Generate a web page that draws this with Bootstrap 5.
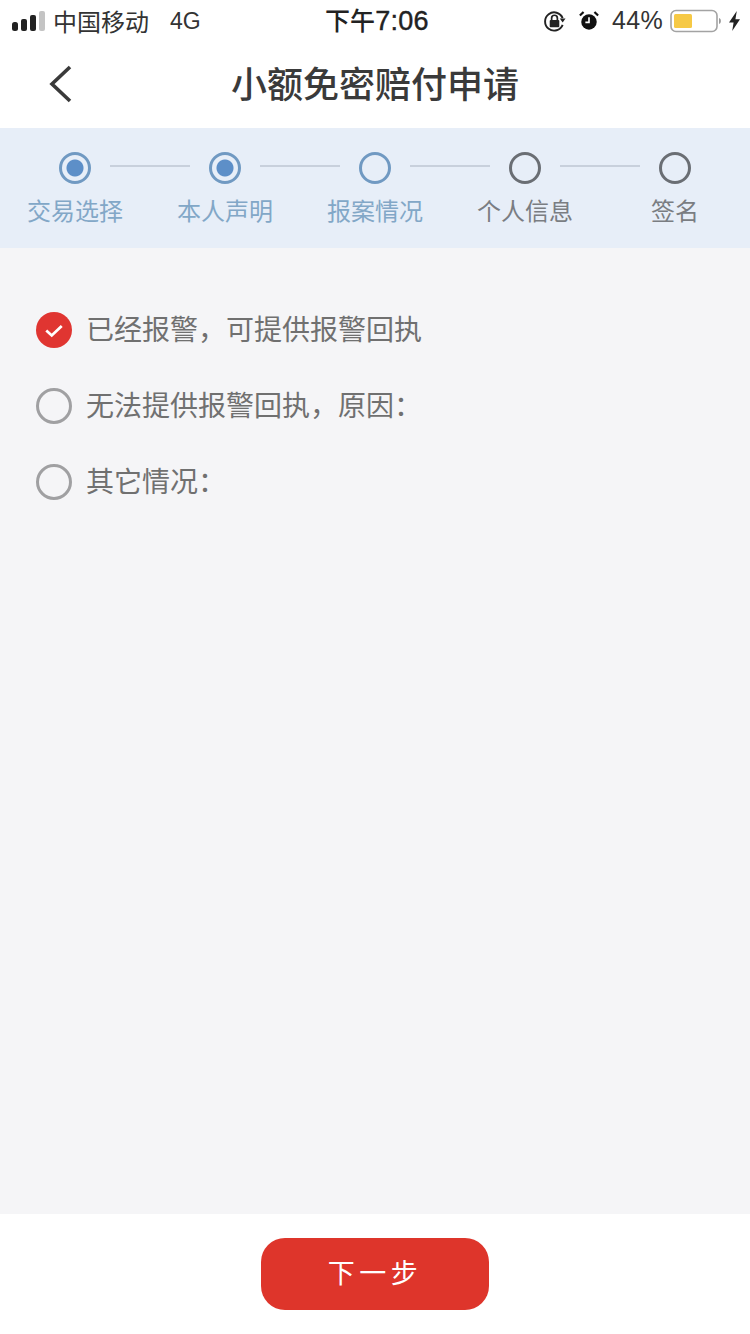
<!DOCTYPE html>
<html lang="zh">
<head>
  <meta charset="utf-8">
  <title>小额免密赔付申请</title>
  <link rel="stylesheet" href="https://cdn.jsdelivr.net/npm/bootstrap@5.3.0/dist/css/bootstrap.min.css">
  <style>
    html, body { height: 100%; }
    body { font-family: "Liberation Sans", "Noto Sans CJK SC", sans-serif; color: #666; background: #fff; }
    .cjk { font-family: "Noto Sans CJK SC", sans-serif; }
    .phone { width: 750px; height: 1334px; }
    .status-bar { height: 40px; padding: 2px 10px 0 12px; font-size: 24px; color: #333; }
    .status-left, .status-right { width: 300px; }
    .status-time { font-size: 25px; font-weight: 500; color: #222; padding-left: 2px; }
    .status-time b { font-family: "Liberation Sans", sans-serif; font-size: 27px; font-weight: 400; letter-spacing: .3px; -webkit-text-stroke: .4px #222; }
    .status-pct { font-size: 25px; letter-spacing: .3px; }
    .title-bar { height: 88px; }
    .title-bar h1 { font-size: 36px; font-weight: 500; color: #3a3a3a; margin: 0; padding-bottom: 2px; }
    .back-link { left: 46px; top: 24px; line-height: 0; }
    .steps { height: 120px; background: #e7eef8; padding-top: 24px; }
    .step-dots { padding: 0 59px; gap: 19px; height: 32px; }
    .dot { width: 32px; height: 32px; border-radius: 50%; border: 3px solid #6a6e74; flex: none; }
    .dot.on { border-color: #7099c2; }
    .dot.done { background: radial-gradient(circle, #5d8fc8 0 8px, transparent 9px); }
    .dot-line { width: 80px; height: 2px; background: #c8d0dc; margin-bottom: 4px; }
    .step-names { margin-top: 10px; }
    .step-names > div { width: 150px; font-size: 24px; line-height: 32px; text-align: center; color: #7a7d82; }
    .step-names > div.on { color: #82a7c7; }
    .content { background: #f5f5f7; padding: 64px 36px 0; }
    .choice { height: 36px; margin-bottom: 40px; gap: 14px; font-size: 28px; color: #707070; }
    .choice-text { margin-top: -4px; }
    .ring { width: 36px; height: 36px; border-radius: 50%; border: 3px solid #a0a0a2; flex: none; }
    .ring.on { border: 0; background: #e03531; }
    .footer-bar { height: 120px; padding-top: 24px; }
    .next-btn { width: 228px; height: 72px; border: 0; border-radius: 24px; background: #de352b; color: #fff; font-size: 27px; letter-spacing: 4.500px; padding: 0 0 3px; }
    .next-btn:hover { background: #de352b; color: #fff; }
  </style>
</head>
<body>
  <div class="phone d-flex flex-column">
    <div class="status-bar d-flex align-items-center justify-content-between flex-shrink-0">
      <div class="status-left d-flex align-items-center">
        <svg width="33" height="20" viewBox="0 0 33 20">
          <rect x="0" y="11" width="6" height="9" rx="2.500" fill="#222"/>
          <rect x="9" y="8" width="6" height="12" rx="2" fill="#222"/>
          <rect x="18" y="4" width="6" height="16" rx="2" fill="#222"/>
          <rect x="27" y="0" width="6" height="20" rx="2" fill="#c4c4c4"/>
        </svg>
        <span class="ms-2 cjk">中国移动</span>
        <span style="font-size:23px;margin-left:21px">4G</span>
      </div>
      <div class="status-time cjk">下午<b>7:06</b></div>
      <div class="status-right d-flex align-items-center justify-content-end">
        <svg width="23" height="24" viewBox="0 0 24 24">
          <path d="M20.500 9A9.500 9.500 0 1 0 20.500 16" fill="none" stroke="#222" stroke-width="2"/>
          <path d="M17.500 9.500h6l-3 4z" fill="#222"/>
          <rect x="7" y="11" width="10" height="7.500" rx="1" fill="#222"/>
          <path d="M9 11V9a3 3 0 0 1 6 0v2" fill="none" stroke="#222" stroke-width="1.800"/>
        </svg>
        <svg width="20" height="20" viewBox="0 0 22 22" style="margin:0 13px">
          <circle cx="11" cy="12" r="8.500" fill="#111"/>
          <path d="M11 7v5.500H7" fill="none" stroke="#fff" stroke-width="1.800"/>
          <path d="M1 5l4-4M21 5l-4-4" stroke="#111" stroke-width="2.400"/>
        </svg>
        <span class="status-pct">44%</span>
        <svg width="52" height="24" viewBox="0 0 52 24" style="margin-left:7px">
          <rect x="1" y="1.500" width="46" height="21" rx="5" fill="#fff" stroke="#a3a3a3" stroke-width="1.600"/>
          <rect x="4" y="5" width="18" height="14" rx="1.500" fill="#f6c945"/>
          <path d="M49 9c2.500 .5 2.500 5.500 0 6z" fill="#999"/>
        </svg>
        <svg width="11" height="22" viewBox="0 0 12 22" style="margin-left:7px">
          <path d="M8.500 0 0 12.500h5L3.500 22 12 9H7z" fill="#222"/>
        </svg>
      </div>
    </div>

    <div class="title-bar position-relative d-flex align-items-center justify-content-center flex-shrink-0">
      <a class="back-link position-absolute" href="#" aria-label="返回">
        <svg width="28" height="40" viewBox="0 0 28 40">
          <path d="M24 3 6 20l18 17" fill="none" stroke="#3a3a3a" stroke-width="3.600"/>
        </svg>
      </a>
      <h1 class="cjk">小额免密赔付申请</h1>
    </div>

    <div class="steps flex-shrink-0 cjk">
      <div class="step-dots d-flex align-items-center">
        <span class="dot on done"></span><span class="dot-line"></span>
        <span class="dot on done"></span><span class="dot-line"></span>
        <span class="dot on"></span><span class="dot-line"></span>
        <span class="dot"></span><span class="dot-line"></span>
        <span class="dot"></span>
      </div>
      <div class="step-names d-flex">
        <div class="on">交易选择</div>
        <div class="on">本人声明</div>
        <div class="on">报案情况</div>
        <div>个人信息</div>
        <div>签名</div>
      </div>
    </div>

    <div class="content flex-grow-1 cjk">
      <div class="choice d-flex align-items-center">
        <span class="ring on d-flex align-items-center justify-content-center">
          <svg width="20" height="15" viewBox="0 0 22 16"><path d="M2.500 8 8.500 13.500 19.500 3" fill="none" stroke="#fff" stroke-width="3"/></svg>
        </span>
        <span class="choice-text">已经报警&#xFF0C;可提供报警回执</span>
      </div>
      <div class="choice d-flex align-items-center">
        <span class="ring"></span>
        <span class="choice-text">无法提供报警回执&#xFF0C;原因&#xFF1A;</span>
      </div>
      <div class="choice d-flex align-items-center">
        <span class="ring"></span>
        <span class="choice-text">其它情况&#xFF1A;</span>
      </div>
    </div>

    <div class="footer-bar d-flex justify-content-center align-items-start flex-shrink-0">
      <button type="button" class="btn next-btn cjk">下一步</button>
    </div>
  </div>
</body>
</html>
